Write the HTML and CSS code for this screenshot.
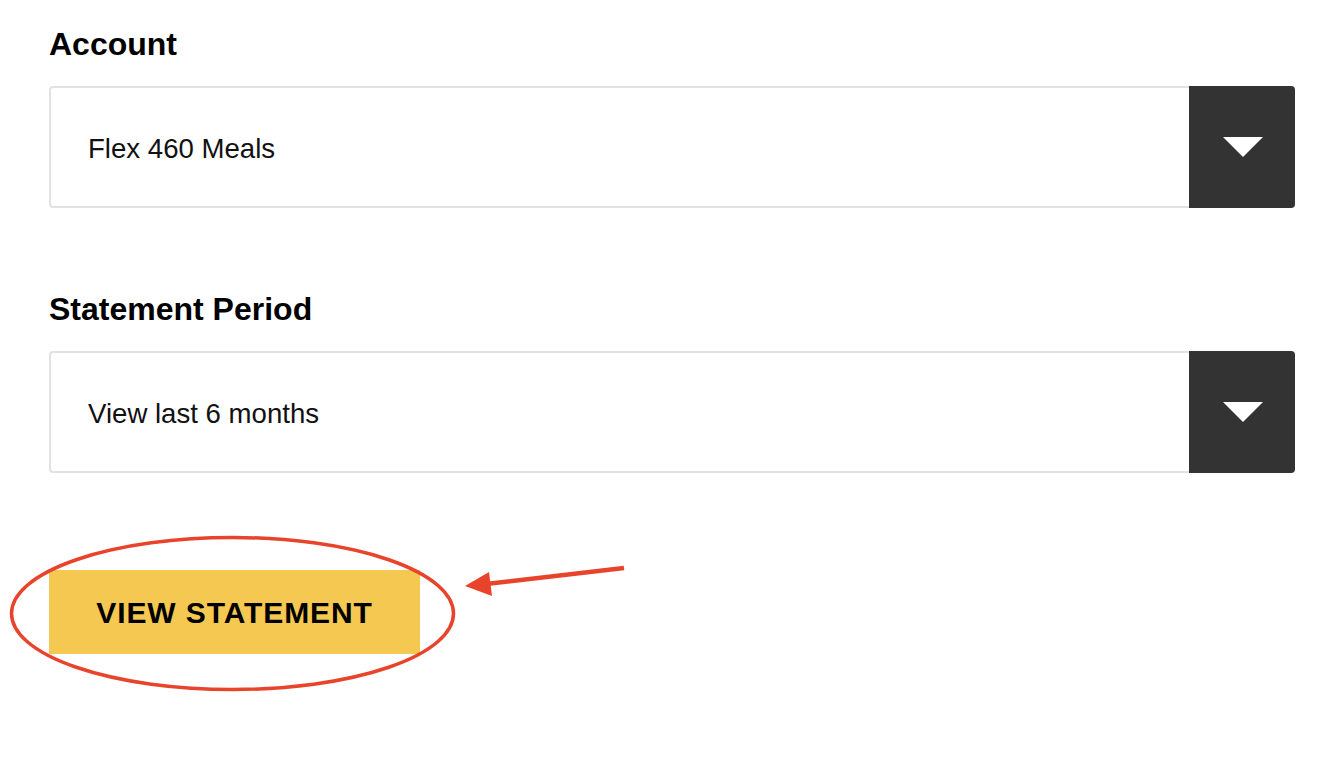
FILE: index.html
```html
<!DOCTYPE html>
<html>
<head>
<meta charset="utf-8">
<link rel="stylesheet" href="styles.css">
</head>
<body>
<main class="page">
  <label class="field-label">Account</label>
  <div class="select">
    <span class="select-value">Flex 460 Meals</span>
    <span class="select-arrow"><span class="tri"></span></span>
  </div>
  <label class="field-label second">Statement Period</label>
  <div class="select">
    <span class="select-value">View last 6 months</span>
    <span class="select-arrow"><span class="tri"></span></span>
  </div>
  <button class="btn">VIEW STATEMENT</button>
</main>
<svg class="annot" width="1342" height="760" viewBox="0 0 1342 760">
  <ellipse cx="232.5" cy="613.5" rx="221" ry="76" fill="none" stroke="#e8442b" stroke-width="3.5"/>
  <line x1="624" y1="568" x2="486" y2="584" stroke="#e8442b" stroke-width="4.5"/>
  <polygon points="465,586 489,572 492,596" fill="#e8442b"/>
</svg>
</body>
</html>
```

FILE: styles.css
```css
html, body {
  margin: 0;
  padding: 0;
  background: #ffffff;
}
body {
  position: relative;
  width: 1342px;
  height: 760px;
  overflow: hidden;
  font-family: "Liberation Sans", Arial, sans-serif;
  color: #000;
}
.page {
  display: flex;
  flex-direction: column;
  align-items: flex-start;
  padding: 26px 47px 0 49px;
}
.field-label {
  display: block;
  font-size: 32px;
  font-weight: bold;
  line-height: 36px;
  margin-bottom: 24px;
}
.field-label.second {
  margin-top: 83px;
}
.select {
  box-sizing: border-box;
  width: 1246px;
  height: 122px;
  border: 2px solid #e2e2e2;
  border-radius: 4px;
  display: flex;
  align-items: center;
  background: #fff;
}
.select-value {
  flex: 1;
  padding-left: 37px;
  padding-top: 3px;
  font-size: 27.6px;
  color: #111;
}
.select-arrow {
  align-self: stretch;
  width: 106px;
  margin: -2px -2px -2px 0;
  background: #333333;
  border-radius: 0 4px 4px 0;
  display: flex;
  align-items: center;
  justify-content: center;
}
.tri {
  width: 0;
  height: 0;
  border-left: 20px solid transparent;
  border-right: 20px solid transparent;
  border-top: 20px solid #ffffff;
  margin-left: 2px;
}
.btn {
  margin-top: 97px;
  width: 371px;
  height: 84px;
  border: none;
  border-radius: 0;
  background: #f5c852;
  font-family: "Liberation Sans", Arial, sans-serif;
  font-weight: bold;
  font-size: 30px;
  letter-spacing: 0.9px;
  color: #000;
  padding: 2px 0 0 0;
}
.annot {
  position: absolute;
  left: 0;
  top: 0;
  pointer-events: none;
}
```
